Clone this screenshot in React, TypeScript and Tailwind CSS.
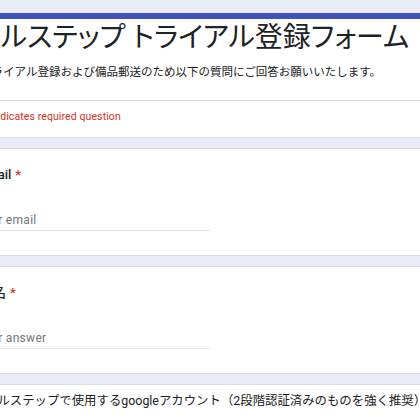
import React from 'react';

const font = "font-['Roboto','Noto_Sans_CJK_JP',sans-serif]";

interface QuestionProps {
  label: string;
  placeholder: string;
  labelShift: string;
}

const Question: React.FC<QuestionProps> = ({ label, placeholder, labelShift }) => (
  <section className="mt-[10px] bg-white border-y border-[#dadce0]">
    <div className="ml-[-19px] pt-[16px] pb-[24px]">
      <div className={`h-[20px] leading-[20px] text-[13px] font-medium text-[#202124] ${labelShift}`}>
        {label}
        <span className="ml-[4px] text-[#d93025]">*</span>
      </div>
      <div className="mt-[25px] ml-[-4px] w-[233px] h-[21px] border-b border-[#e3e3e3] text-[12px] leading-[20px] tracking-[0.3px] text-[#70757a]">
        {placeholder}
      </div>
    </div>
  </section>
);

export default function App() {
  return (
    <div className={`h-[420px] w-[420px] overflow-hidden bg-[#e9ebf6] pt-[13px] ${font}`}>
      <section className="bg-white border-b border-[#dadce0]">
        <div className="h-[6px] bg-[#3f51b5]" />
        <div className="pt-px">
          <h1 className="ml-[-26px] h-[36px] leading-[36px] text-[28px] font-normal text-[#202124] whitespace-nowrap [font-feature-settings:'palt']">
            エルステップ トライアル登録フォーム
          </h1>
          <p className="ml-[-20px] mt-[7px] h-[18px] leading-[18px] text-[11.5px] text-[#202124] whitespace-nowrap">
            トライアル登録および備品郵送のため以下の質問にご回答お願いいたします。
          </p>
        </div>
        <div className="mt-[19px] border-t border-[#dadce0]">
          <div className="ml-[-16px] pt-[8px] pb-[12px] h-[36px] text-[10.5px] leading-[16px] tracking-[0.1px] text-[#d93025] whitespace-nowrap">
            * Indicates required question
          </div>
        </div>
      </section>

      <Question label="Email" placeholder="Your email" labelShift="ml-[-2px]" />
      <Question label="氏名" placeholder="Your answer" labelShift="ml-[-1px]" />

      <section className="mt-[10px] bg-white border-t border-[#dadce0] h-[38px]">
        <div className="ml-[-15px] pt-[6px] h-[26px] leading-[20px] text-[12.4px] text-[#202124] whitespace-nowrap">
          エルステップで使用するgoogleアカウント（2段階認証済みのものを強く推奨）
        </div>
      </section>
    </div>
  );
}
